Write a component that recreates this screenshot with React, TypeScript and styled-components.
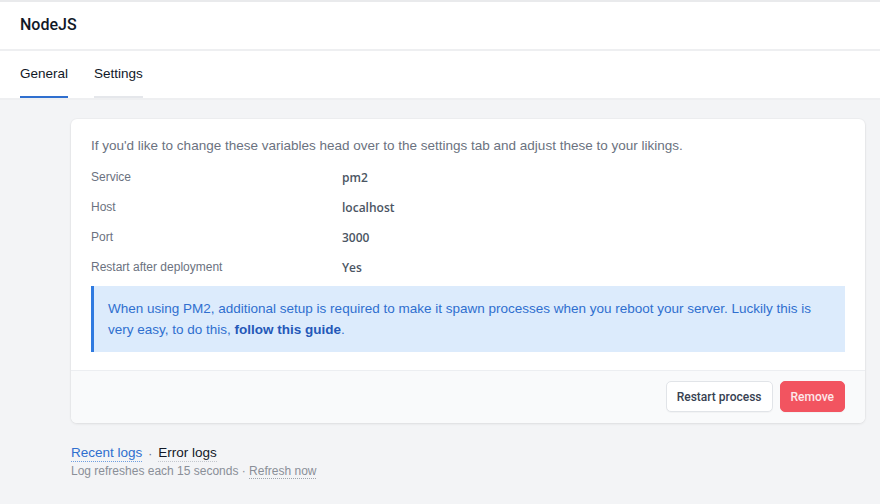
import React from 'react';
import styled, { createGlobalStyle } from 'styled-components';

const GlobalStyle = createGlobalStyle`
  html, body {
    margin: 0;
    padding: 0;
    background: #f3f4f6;
    font-family: 'Liberation Sans', Arial, sans-serif;
    -webkit-font-smoothing: antialiased;
  }
`;

const Page = styled.div`
  min-height: 504px;
  border-top: 2px solid #e9eaec;
`;

const Header = styled.header`
  height: 47px;
  background: #fff;
  border-bottom: 2px solid #eeeff1;
  display: flex;
  align-items: center;
  padding: 0 20px;
`;

const Title = styled.h1`
  margin: 0 0 2px;
  font-family: Roboto, 'Liberation Sans', sans-serif;
  font-size: 16px;
  font-weight: 500;
  color: #111827;
`;

const TabBar = styled.nav`
  height: 47px;
  background: #fff;
  border-bottom: 2px solid #eeeff1;
  display: flex;
  gap: 26px;
  padding: 0 20px;
`;

const Tab = styled.a<{ active?: boolean }>`
  display: flex;
  align-items: center;
  height: 100%;
  box-sizing: border-box;
  border-bottom: 2px solid ${p => (p.active ? '#2f6fcf' : '#e5e7eb')};
  font-size: 13.5px;
  color: #111827;
  cursor: pointer;
`;

const Main = styled.main`
  padding: 19px 15px 0 71px;
`;

const Card = styled.section`
  background: #fff;
  border-radius: 6px;
  box-shadow: 0 1px 3px rgba(0, 0, 0, 0.08), 0 0 0 1px rgba(0, 0, 0, 0.02);
  overflow: hidden;
`;

const CardBody = styled.div`
  padding: 19px 20px 18px;
`;

const Intro = styled.p`
  margin: 0 0 9px;
  font-size: 13.5px;
  color: #6b7280;
`;

const InfoList = styled.dl`
  margin: 0;
  display: grid;
  grid-template-columns: 251px 1fr;
`;

const Label = styled.dt`
  height: 30px;
  display: flex;
  align-items: center;
  font-size: 12px;
  color: #6b7280;
`;

const Value = styled.dd`
  margin: 0;
  height: 30px;
  display: flex;
  align-items: center;
  font-family: 'Open Sans', 'Liberation Sans', sans-serif;
  font-size: 12px;
  font-weight: 600;
  color: #4b5563;
`;

const Notice = styled.div`
  margin-top: 4px;
  padding: 12px 20px 12px 14px;
  background: #dcebfc;
  border-left: 3px solid #2f7ae0;
  font-size: 13.5px;
  line-height: 21px;
  color: #2f6fcf;
`;

const NoticeLink = styled.a`
  font-weight: 700;
  color: #2458b8;
  text-decoration: none;
`;

const CardFooter = styled.div`
  background: #f9fafb;
  border-top: 1px solid #eceef1;
  padding: 10px 20px 11px;
  display: flex;
  justify-content: flex-end;
  gap: 7px;
`;

const Button = styled.button<{ danger?: boolean }>`
  height: 31px;
  padding: 0 10px;
  border-radius: 5px;
  font-family: Roboto, 'Liberation Sans', sans-serif;
  font-size: 12px;
  font-weight: 500;
  cursor: pointer;
  border: 1px solid ${p => (p.danger ? '#f25460' : '#e1e4e8')};
  background: ${p => (p.danger ? '#f25460' : '#fff')};
  color: ${p => (p.danger ? '#fde8ea' : '#374151')};
  box-shadow: 0 1px 1px rgba(0, 0, 0, 0.03);
`;

const Logs = styled.div`
  padding: 22px 0 0;
`;

const LogTabs = styled.div`
  display: flex;
  align-items: center;
  gap: 6px;
  font-size: 13.5px;
`;

const LogTab = styled.a<{ active?: boolean }>`
  color: ${p => (p.active ? '#2f6fcf' : '#111827')};
  border-bottom: 1px dotted ${p => (p.active ? '#6f9fe0' : '#c3c7cd')};
  padding-bottom: 1px;
  cursor: pointer;
`;

const Dot = styled.span`
  color: #6b7280;
  font-size: 12px;
`;

const LogHint = styled.div`
  margin-top: 2px;
  font-size: 12px;
  color: #8a8f98;
`;

const RefreshLink = styled.a`
  border-bottom: 1px dotted #a0a5ad;
  cursor: pointer;
`;

const rows: Array<[string, string]> = [
  ['Service', 'pm2'],
  ['Host', 'localhost'],
  ['Port', '3000'],
  ['Restart after deployment', 'Yes'],
];

export default function App() {
  return (
    <Page>
      <GlobalStyle />
      <Header>
        <Title>NodeJS</Title>
      </Header>
      <TabBar>
        <Tab active>General</Tab>
        <Tab>Settings</Tab>
      </TabBar>
      <Main>
        <Card>
          <CardBody>
            <Intro>
              If you'd like to change these variables head over to the settings
              tab and adjust these to your likings.
            </Intro>
            <InfoList>
              {rows.map(([label, value]) => (
                <React.Fragment key={label}>
                  <Label>{label}</Label>
                  <Value>{value}</Value>
                </React.Fragment>
              ))}
            </InfoList>
            <Notice>
              When using PM2, additional setup is required to make it spawn
              processes when you reboot your server. Luckily this is very easy,
              to do this, <NoticeLink>follow this guide</NoticeLink>.
            </Notice>
          </CardBody>
          <CardFooter>
            <Button>Restart process</Button>
            <Button danger>Remove</Button>
          </CardFooter>
        </Card>
        <Logs>
          <LogTabs>
            <LogTab active>Recent logs</LogTab>
            <Dot>·</Dot>
            <LogTab>Error logs</LogTab>
          </LogTabs>
          <LogHint>
            Log refreshes each 15 seconds · <RefreshLink>Refresh now</RefreshLink>
          </LogHint>
        </Logs>
      </Main>
    </Page>
  );
}
